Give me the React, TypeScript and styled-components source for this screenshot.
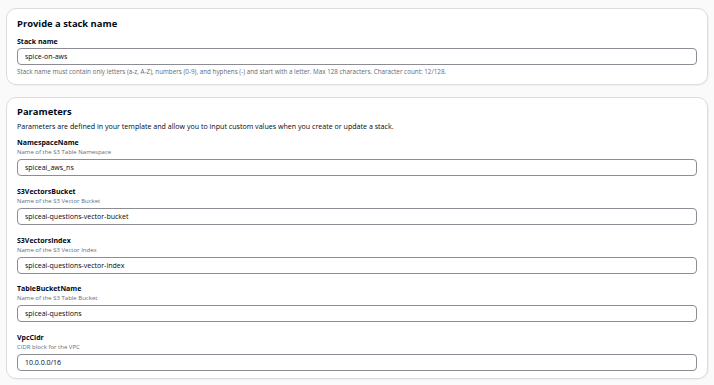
import React from 'react';
import styled, { createGlobalStyle } from 'styled-components';

const GlobalStyle = createGlobalStyle`
  html, body {
    margin: 0;
    padding: 0;
    background: #fafafa;
  }
  body {
    font-family: 'Open Sans', 'Noto Sans', sans-serif;
    color: #000716;
  }
`;

type Param = {
  name: string;
  description: string;
  value: string;
};

const PARAMS: Param[] = [
  { name: 'NamespaceName', description: 'Name of the S3 Table Namespace', value: 'spiceai_aws_ns' },
  { name: 'S3VectorsBucket', description: 'Name of the S3 Vector Bucket', value: 'spiceai-questions-vector-bucket' },
  { name: 'S3VectorsIndex', description: 'Name of the S3 Vector Index', value: 'spiceai-questions-vector-index' },
  { name: 'TableBucketName', description: 'Name of the S3 Table Bucket', value: 'spiceai-questions' },
  { name: 'VpcCidr', description: 'CIDR block for the VPC', value: '10.0.0.0/16' },
];

const StackName = 'spice-on-aws';

const App: React.FC = () => {
  return (
    <>
      <GlobalStyle />
      <StyledPage>
        <StyledCard>
          <StyledHeading>Provide a stack name</StyledHeading>
          <StyledFieldList $top={6}>
            <StyledField>
              <StyledLabel>Stack name</StyledLabel>
              <StyledInput readOnly value={StackName} $gap={1} />
              <StyledHint>
                Stack name must contain only letters (a-z, A-Z), numbers (0-9), and hyphens (-) and start with a
                letter. Max 128 characters. Character count: {StackName.length}/128.
              </StyledHint>
            </StyledField>
          </StyledFieldList>
        </StyledCard>

        <StyledCard>
          <StyledHeading>Parameters</StyledHeading>
          <StyledIntro>
            Parameters are defined in your template and allow you to input custom values when you create or update a
            stack.
          </StyledIntro>
          <StyledFieldList $top={7}>
            {PARAMS.map((p) => (
              <StyledField key={p.name}>
                <StyledLabel>{p.name}</StyledLabel>
                <StyledDescription>{p.description}</StyledDescription>
                <StyledInput readOnly value={p.value} $gap={2} />
              </StyledField>
            ))}
          </StyledFieldList>
        </StyledCard>
      </StyledPage>
    </>
  );
};

const StyledPage = styled.div`
  display: flex;
  flex-direction: column;
  gap: 12px;
  padding: 8px 6px;
`;

const StyledCard = styled.section`
  background: #ffffff;
  border: 1px solid #dcdcde;
  border-radius: 10px;
  padding: 8px 10px 8px;
  box-shadow: 1px 1px 1px rgba(0, 7, 22, 0.04);

  & + & {
    padding-top: 7px;
    padding-bottom: 7px;
  }
`;

const StyledHeading = styled.h2`
  margin: 0;
  font-size: 9.4px;
  line-height: 14px;
  font-weight: 700;
  color: #000716;
`;

const StyledIntro = styled.p`
  margin: 2px 0 0;
  font-size: 7.1px;
  line-height: 10px;
  color: #000716;
`;

const StyledFieldList = styled.div<{ $top: number }>`
  display: flex;
  flex-direction: column;
  gap: 10.75px;
  margin-top: ${(p) => p.$top}px;
`;

const StyledField = styled.div`
  display: flex;
  flex-direction: column;
`;

const StyledLabel = styled.label`
  font-size: 7px;
  line-height: 10px;
  font-weight: 700;
  color: #000716;
`;

const StyledDescription = styled.span`
  font-size: 6px;
  line-height: 9px;
  color: #5f6b7a;
`;

const StyledInput = styled.input<{ $gap: number }>`
  box-sizing: border-box;
  width: 100%;
  height: 17px;
  margin-top: ${(p) => p.$gap}px;
  padding: 0 7px;
  border: 1px solid #8c8c94;
  border-radius: 4px;
  background: #ffffff;
  font-family: 'Open Sans', 'Noto Sans', sans-serif;
  font-size: 7px;
  color: #000716;
  outline: none;
`;

const StyledHint = styled.span`
  margin-top: 1.5px;
  margin-bottom: 0.5px;
  font-size: 6.3px;
  line-height: 9px;
  color: #5f6b7a;
`;

export default App;
